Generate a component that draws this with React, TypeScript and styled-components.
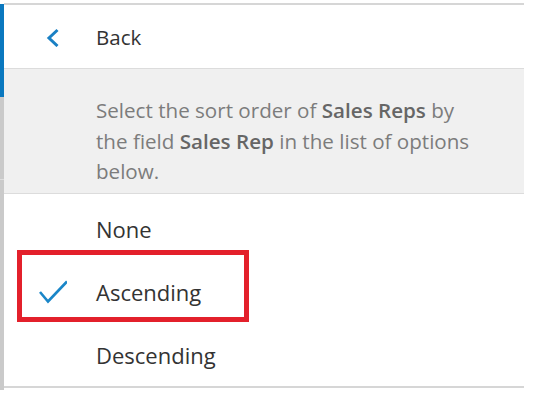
import React from "react";
import styled, { createGlobalStyle } from "styled-components";

const Global = createGlobalStyle`
  html, body { margin: 0; padding: 0; background: #ffffff; }
  body { font-family: "Open Sans", "Noto Sans", sans-serif; }
`;

const Page = styled.div`
  display: flex;
  width: 536px;
  height: 397px;
  overflow: hidden;
  background: #fff;
`;

const SideStrip = styled.div`
  width: 4px;
  display: flex;
  flex-direction: column;
  padding-top: 4px;
  flex-shrink: 0;
`;

const StripSegment = styled.div<{ $color: string; $h?: number }>`
  background: ${(p) => p.$color};
  ${(p) => (p.$h ? `height: ${p.$h}px;` : "flex: 1;")}
`;

const Panel = styled.div`
  width: 520px;
  height: 381px;
  margin-top: 3px;
  border-top: 2px solid #d6d6d6;
  border-bottom: 2px solid #d6d6d6;
  display: flex;
  flex-direction: column;
  box-sizing: content-box;
`;

const Header = styled.button`
  all: unset;
  height: 63px;
  display: flex;
  align-items: center;
  border-bottom: 1px solid #dcdcdc;
  cursor: pointer;
  color: #333;
  font-size: 20.5px;
`;

const IconCell = styled.span`
  width: 92px;
  display: flex;
  align-items: center;
  padding-left: 42px;
  box-sizing: border-box;
`;

const Description = styled.p`
  margin: 0;
  background: #f0f0f0;
  height: 125px;
  box-sizing: border-box;
  padding: 26px 48px 0 92px;
  font-size: 20.6px;
  line-height: 30.5px;
  color: #7c7c7c;
  border-bottom: 1px solid #dcdcdc;
  b {
    color: #666666;
    font-weight: 600;
  }
`;

const Options = styled.div`
  display: flex;
  flex-direction: column;
  padding-top: 3px;
`;

const Option = styled.div`
  position: relative;
  height: 63px;
  display: flex;
  align-items: center;
  font-size: 22px;
  color: #333;
`;

const Highlight = styled.span`
  position: absolute;
  left: 13px;
  top: -10px;
  width: 232px;
  height: 72px;
  border: 5px solid #e3202b;
  box-sizing: border-box;
  pointer-events: none;
`;

const CheckCell = styled.span`
  width: 92px;
  padding-left: 31px;
  box-sizing: border-box;
  display: flex;
  align-items: center;
`;

const Label = styled.span``;

const options = [
  { label: "None", selected: false },
  { label: "Ascending", selected: true },
  { label: "Descending", selected: false },
];

export default function App() {
  return (
    <Page>
      <Global />
      <SideStrip>
        <StripSegment $color="#0a78bf" $h={93} />
        <StripSegment $color="#cacaca" $h={82} />
        <StripSegment $color="#dedede" $h={1} />
        <StripSegment $color="#cacaca" $h={210} />
        <StripSegment $color="#ffffff" />
      </SideStrip>
      <Panel>
        <Header>
          <IconCell>
            <svg width="14" height="20" viewBox="0 0 14 20">
              <path d="M11.5 3 L3 11 L11.5 19" fill="none" stroke="#1a80c4" strokeWidth="3" />
            </svg>
          </IconCell>
          Back
        </Header>
        <Description>
          Select the sort order of <b>Sales Reps</b> by the field <b>Sales Rep</b> in the list of options below.
        </Description>
        <Options>
          {options.map((o) => (
            <Option key={o.label}>
              <CheckCell>
                {o.selected && (
                  <svg width="32" height="24" viewBox="0 0 32 24">
                    <path d="M5 12 L13 21.5 L32 1.5" fill="none" stroke="#1a86c8" strokeWidth="2.6" />
                  </svg>
                )}
              </CheckCell>
              <Label>{o.label}</Label>
              {o.selected && <Highlight />}
            </Option>
          ))}
        </Options>
      </Panel>
    </Page>
  );
}
